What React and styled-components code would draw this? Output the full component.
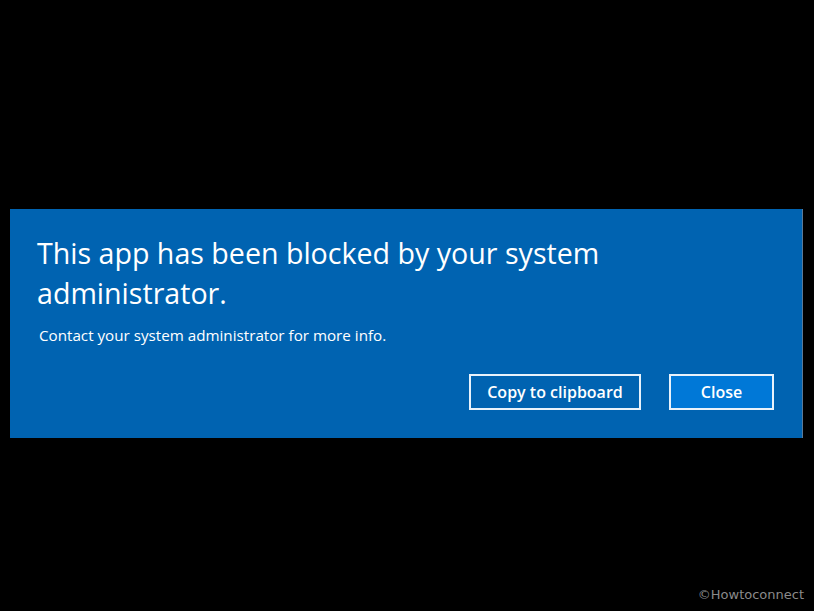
import React from "react";
import styled, { createGlobalStyle } from "styled-components";

const GlobalStyle = createGlobalStyle`
  html, body {
    margin: 0;
    padding: 0;
    background: #000;
  }
  body {
    font-family: "Open Sans", "Noto Sans", sans-serif;
  }
`;

const Page = styled.div`
  position: relative;
  width: 814px;
  height: 611px;
  background: #000;
  padding: 209px 0 0 10px;
  box-sizing: border-box;
`;

const Dialog = styled.div`
  width: 793px;
  height: 229px;
  box-sizing: border-box;
  background: #0063b1;
  border-right: 1px solid #5a7a99;
  padding: 24px 28px 0 27px;
  display: flex;
  flex-direction: column;
  color: #fff;
`;

const Title = styled.div`
  font-size: 28.6px;
  line-height: 40px;
  font-weight: 400;
  margin-bottom: 12px;
`;

const Message = styled.div`
  font-size: 15.2px;
  line-height: 20px;
  padding-left: 2px;
`;

const Actions = styled.div`
  display: flex;
  justify-content: flex-end;
  gap: 28px;
  margin-top: 29px;
`;

const Button = styled.button`
  height: 36px;
  box-sizing: border-box;
  padding: 0;
  width: ${(p) => p.w}px;
  border: 2px solid #e8f2fb;
  background: ${(p) => (p.primary ? "#0078d7" : "#0063b1")};
  color: #fff;
  font-family: "Open Sans", "Noto Sans", sans-serif;
  font-size: 16px;
  font-weight: 600;
  cursor: pointer;
`;

const Watermark = styled.div`
  position: absolute;
  right: 10px;
  bottom: 9px;
  font-family: "DejaVu Sans", sans-serif;
  font-size: 13px;
  color: #8a8a8a;
`;

export default function App() {
  return (
    <>
      <GlobalStyle />
      <Page>
        <Dialog>
          <Title>
            This app has been blocked by your system
            <br />
            administrator.
          </Title>
          <Message>Contact your system administrator for more info.</Message>
          <Actions>
            <Button w={172}>Copy to clipboard</Button>
            <Button w={105} primary>
              Close
            </Button>
          </Actions>
        </Dialog>
        <Watermark>©Howtoconnect</Watermark>
      </Page>
    </>
  );
}
